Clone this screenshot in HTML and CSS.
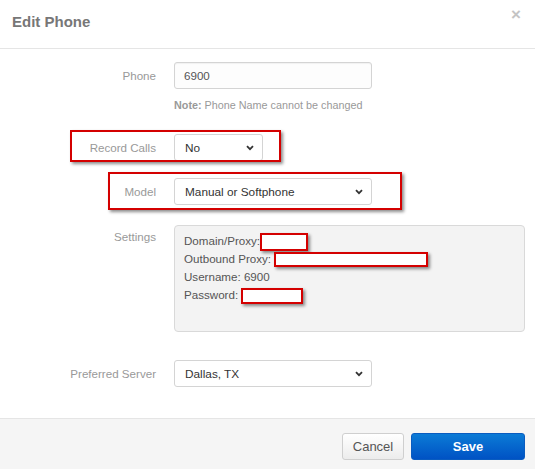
FILE: index.html
```html
<!DOCTYPE html>
<html>
<head>
<meta charset="utf-8">
<link rel="stylesheet" href="styles.css">
</head>
<body>
<div class="modal">
  <div class="modal-header">
    <h3 class="title">Edit Phone</h3>
    <span class="close">×</span>
  </div>
  <div class="modal-body">
    <div class="row row-phone">
      <label class="lbl">Phone</label>
      <div class="ctrl">
        <div class="input">6900</div>
        <p class="note"><b>Note:</b> Phone Name cannot be changed</p>
      </div>
    </div>
    <div class="row row-record">
      <span class="annot annot-record"></span>
      <label class="lbl">Record Calls</label>
      <div class="select sel-small"><span>No</span><svg class="chev" width="8" height="6" viewBox="0 0 8 6"><path d="M1 1.2 L4 4.2 L7 1.2" fill="none" stroke="#333" stroke-width="1.8"/></svg></div>
    </div>
    <div class="row row-model">
      <span class="annot annot-model"></span>
      <label class="lbl">Model</label>
      <div class="select"><span>Manual or Softphone</span><svg class="chev" width="8" height="6" viewBox="0 0 8 6"><path d="M1 1.2 L4 4.2 L7 1.2" fill="none" stroke="#333" stroke-width="1.8"/></svg></div>
    </div>
    <div class="row row-settings">
      <label class="lbl lbl-top">Settings</label>
      <div class="settings">
        <div class="line">Domain/Proxy:<span class="redact r-domain"></span></div>
        <div class="line">Outbound Proxy: <span class="redact r-outbound"></span></div>
        <div class="line">Username: 6900</div>
        <div class="line">Password: <span class="redact r-pass"></span></div>
      </div>
    </div>
    <div class="row row-server">
      <label class="lbl">Preferred Server</label>
      <div class="select"><span>Dallas, TX</span><svg class="chev" width="8" height="6" viewBox="0 0 8 6"><path d="M1 1.2 L4 4.2 L7 1.2" fill="none" stroke="#333" stroke-width="1.8"/></svg></div>
    </div>
  </div>
  <div class="modal-footer">
    <button class="btn btn-cancel">Cancel</button>
    <button class="btn btn-save">Save</button>
  </div>
</div>
</body>
</html>
```

FILE: styles.css
```css
* { box-sizing: border-box; }
html, body { margin: 0; padding: 0; background: #fff; }
body { font-family: "Liberation Sans", Arial, sans-serif; font-size: 11.6px; color: #555; }

.modal { width: 535px; height: 469px; display: flex; flex-direction: column; background: #fff; }

.modal-header {
  height: 49px;
  border-bottom: 1px solid #e5e5e5;
  display: flex;
  justify-content: space-between;
  padding: 0 14px 0 12px;
}
.title { margin: 0; padding-top: 13px; font-size: 15px; font-weight: bold; color: #777; line-height: 18px; }
.close { padding-top: 6px; font-size: 17px; font-weight: bold; color: #c4c4c4; line-height: 18px; }

.modal-body { flex: 1; padding-top: 13px; }

.row { position: relative; display: flex; align-items: center; gap: 18px; }
.lbl { width: 156px; text-align: right; color: #999; font-size: 11.6px; }
.lbl-top { align-self: flex-start; padding-top: 5px; }

.input {
  width: 198px; height: 27px;
  border: 1px solid #d4d4d4; border-radius: 3px;
  background: #fdfdfd;
  box-shadow: inset 0 1px 1px rgba(0,0,0,0.05);
  padding: 0 9px; line-height: 25px; color: #555;
}
.row-phone { align-items: flex-start; }
.row-phone .lbl { line-height: 27px; }
.note { margin: 8px 0 0; font-size: 10.8px; line-height: 16px; color: #999; }
.note b { color: #999; }

.select {
  width: 198px; height: 27px;
  border: 1px solid #d4d4d4; border-radius: 3px;
  background: #fff;
  display: flex; align-items: center; justify-content: space-between;
  padding: 0 8px 0 10px; color: #333; font-size: 11.8px;
}
.sel-small { width: 89px; }
.chev { display: block; }

.row-record { margin-top: 21px; }
.row-model { margin-top: 17px; }
.row-settings { margin-top: 20px; align-items: flex-start; }
.row-server { margin-top: 28px; }

.annot {
  position: absolute;
  border: 2px solid #d40000;
  box-shadow: 2px 2px 3px rgba(0,0,0,0.45);
  pointer-events: none;
}
.annot-record { left: 70px; top: -4px; width: 211px; height: 32px; }
.annot-model { left: 108px; top: -6px; width: 294px; height: 38px; }

.settings {
  width: 351px; height: 107px;
  background: #f3f3f3;
  border: 1px solid #d9d9d9; border-radius: 4px;
  padding: 6px 9px;
  color: #555;
}
.line { height: 18px; line-height: 18px; white-space: nowrap; }
.redact {
  display: inline-block;
  background: #fff;
  border: 2px solid #d40000;
  box-shadow: 2px 2px 3px rgba(0,0,0,0.45);
  vertical-align: middle;
}
.r-domain { width: 48px; height: 18px; }
.r-outbound { width: 154px; height: 15px; }
.r-pass { width: 62px; height: 16px; }

.modal-footer {
  height: 51px;
  background: #f5f5f5;
  border-top: 1px solid #e5e5e5;
  display: flex; justify-content: flex-end; align-items: flex-start;
  gap: 7px;
  padding: 14px 10px 0 0;
}
.btn {
  height: 27px; border-radius: 3px;
  font-family: "Liberation Sans", Arial, sans-serif; font-size: 13px;
  padding: 0; cursor: pointer;
}
.btn-cancel {
  width: 62px;
  background: linear-gradient(#ffffff, #ececec);
  border: 1px solid #cfcfcf;
  color: #555;
}
.btn-save {
  width: 114px;
  background: linear-gradient(#0b7bd6, #0052c4);
  border: 1px solid #0a5cc0;
  color: #fff; font-weight: bold;
}
```
